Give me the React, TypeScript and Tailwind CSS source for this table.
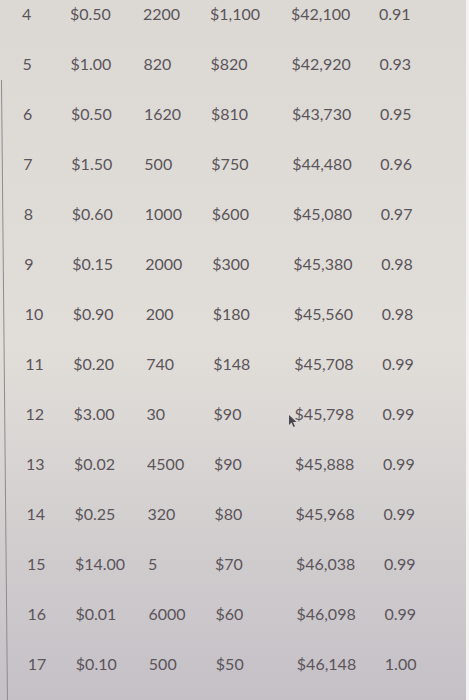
const rows = [
  ['4', '$0.50', '2200', '$1,100', '$42,100', '0.91'],
  ['5', '$1.00', '820', '$820', '$42,920', '0.93'],
  ['6', '$0.50', '1620', '$810', '$43,730', '0.95'],
  ['7', '$1.50', '500', '$750', '$44,480', '0.96'],
  ['8', '$0.60', '1000', '$600', '$45,080', '0.97'],
  ['9', '$0.15', '2000', '$300', '$45,380', '0.98'],
  ['10', '$0.90', '200', '$180', '$45,560', '0.98'],
  ['11', '$0.20', '740', '$148', '$45,708', '0.99'],
  ['12', '$3.00', '30', '$90', '$45,798', '0.99'],
  ['13', '$0.02', '4500', '$90', '$45,888', '0.99'],
  ['14', '$0.25', '320', '$80', '$45,968', '0.99'],
  ['15', '$14.00', '5', '$70', '$46,038', '0.99'],
  ['16', '$0.01', '6000', '$60', '$46,098', '0.99'],
  ['17', '$0.10', '500', '$50', '$46,148', '1.00'],
];

const colWidths = ['w-[48px]', 'w-[73px]', 'w-[67px]', 'w-[81px]', 'w-[88px]', 'w-[60px]'];

export default function App() {
  return (
    <div className="relative h-[700px] w-[469px] overflow-hidden bg-gradient-to-b from-[#dcd9d5] via-[#e1ded9] to-[#c4c0c6] font-['Lato','Noto_Sans',sans-serif] text-[16px] text-[#5b545a]">
      {/* left edge line of the table frame */}
      <div className="absolute left-[1px] top-[80px] h-[620px] w-px origin-top -rotate-[0.55deg] bg-[#8f8a8e]" />
      {/* right edge strip */}
      <div className="absolute right-0 top-0 h-[700px] w-[3px] bg-[#f4f3f1]" />

      <div className="-mt-[11px]">
        {rows.map((row, i) => (
          <div
            key={row[0]}
            className="flex h-[50px] items-center"
            style={{ paddingLeft: 22 + i * 0.45 }}
          >
            {row.map((cell, j) => (
              <div key={j} className={`${colWidths[j]} shrink-0 whitespace-nowrap`}>
                {i === 8 && j === 4 ? (
                  <span className="relative">
                    <svg
                      className="absolute -left-[7px] top-[10px]"
                      width="10"
                      height="14"
                      viewBox="0 0 10 14"
                    >
                      <path d="M1 1 L1 11 L3.5 8.5 L5.5 13 L7 12.3 L5 8 L8.5 8 Z" fill="#4a4650" />
                    </svg>
                    {cell}
                  </span>
                ) : (
                  cell
                )}
              </div>
            ))}
          </div>
        ))}
      </div>
    </div>
  );
}
